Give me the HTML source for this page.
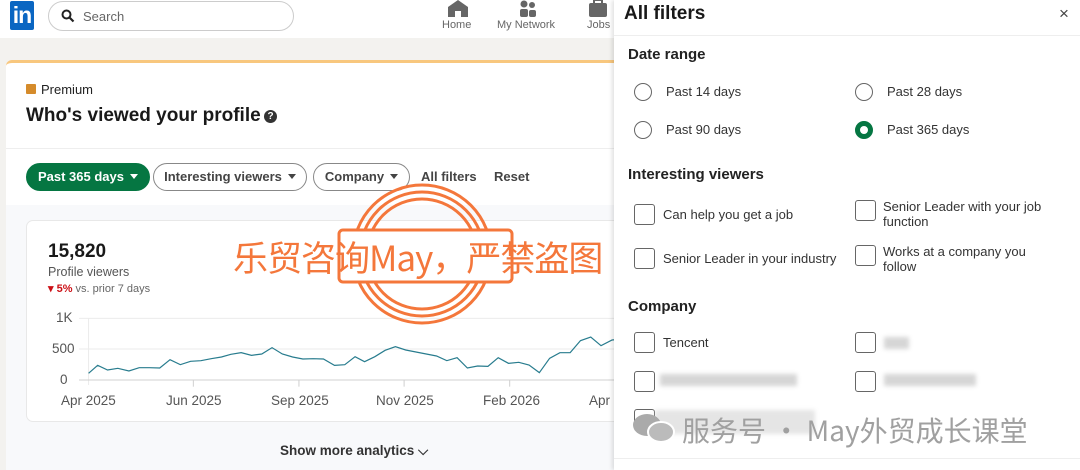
<!DOCTYPE html>
<html><head><meta charset="utf-8"><style>
*{margin:0;padding:0;box-sizing:border-box}
body{width:1080px;height:470px;overflow:hidden;background:#f3f2ef;font-family:"Liberation Sans","Noto Sans CJK SC",sans-serif;color:#191919;position:relative}
.a{position:absolute}
.nav{left:0;top:0;width:614px;height:38px;background:#fff}
.pill{position:absolute;top:163px;height:28px;border-radius:14px;font-size:13px;font-weight:bold;line-height:26px;border:1px solid #888;color:#444;background:#fff;white-space:nowrap;text-align:center}
.tri{display:inline-block;width:0;height:0;border-left:4px solid transparent;border-right:4px solid transparent;border-top:5px solid currentColor;margin-left:6px;vertical-align:2px}
.panel{left:614px;top:0;width:466px;height:470px;background:#fff;box-shadow:-2px 0 4px rgba(0,0,0,.12)}
.h{position:absolute;font-size:15px;font-weight:bold;color:#222}
.rad{position:absolute;width:18px;height:18px;border:1.5px solid #666;border-radius:50%}
.cb{position:absolute;width:21px;height:21px;border:1.5px solid #666;border-radius:3px}
.lb{position:absolute;font-size:13px;color:#333;line-height:15px}
.blur{position:absolute;background:#ccc;filter:blur(2px);opacity:.8}
.ax{position:absolute;font-size:13.5px;color:#555;white-space:nowrap}
</style></head><body>
<div class="a nav"></div>
<div class="a" style="left:10px;top:1px;width:24px;height:29px;background:#0a66c2;border-radius:2px;color:#fff;font-weight:bold;font-size:23px;line-height:29px;text-align:center;letter-spacing:-1px">in</div>
<div class="a" style="left:48px;top:1px;width:246px;height:30px;border:1px solid #ccc;border-radius:15px;background:#fff"></div>
<svg class="a" style="left:61px;top:9px" width="14" height="14" viewBox="0 0 14 14"><circle cx="5.5" cy="5.5" r="4" fill="none" stroke="#222" stroke-width="2"/><path d="M8.5 8.5L12.5 12.5" stroke="#222" stroke-width="2.2"/></svg>
<div class="a" style="left:83px;top:9px;font-size:13px;color:#666">Search</div>
<svg class="a" style="left:447px;top:0" width="22" height="17" viewBox="0 0 22 17"><path d="M11 0L21 7V17H14V11H8V17H1V7Z" fill="#666"/></svg>
<div class="a" style="left:442px;top:19px;font-size:11px;color:#666">Home</div>
<svg class="a" style="left:517px;top:0" width="22" height="17" viewBox="0 0 22 17"><circle cx="7" cy="4" r="3.5" fill="#666"/><circle cx="15" cy="5" r="3" fill="#666"/><rect x="3" y="9" width="8" height="8" rx="2" fill="#666"/><rect x="12" y="10" width="7" height="7" rx="2" fill="#666"/></svg>
<div class="a" style="left:497px;top:19px;font-size:11px;color:#666">My Network</div>
<svg class="a" style="left:588px;top:0" width="20" height="17" viewBox="0 0 20 17"><rect x="6" y="0" width="8" height="4" fill="none" stroke="#666" stroke-width="2"/><rect x="1" y="3" width="18" height="14" rx="2" fill="#666"/></svg>
<div class="a" style="left:587px;top:19px;font-size:11px;color:#666">Jobs</div>

<div class="a" style="left:6px;top:60px;width:608px;height:146px;background:#fff;border-top:3px solid #f8c77e;border-radius:6px 0 0 0"></div>
<div class="a" style="left:6px;top:148px;width:608px;height:1px;background:#eee"></div>
<div class="a" style="left:6px;top:205px;width:608px;height:265px;background:#f8f9fb"></div>
<div class="a" style="left:26px;top:84px;width:10px;height:10px;background:#d58b2b;border-radius:1px"></div>
<div class="a" style="left:41px;top:82px;font-size:13px;color:#222">Premium</div>
<div class="a" style="left:26px;top:105px;font-size:19px;font-weight:bold;color:#191919">Who's viewed your profile</div>
<div class="a" style="left:264px;top:110px;width:13px;height:13px;border-radius:50%;background:#333;color:#fff;font-size:10px;font-weight:bold;text-align:center;line-height:13px">?</div>
<div class="pill" style="left:26px;width:124px;background:#057642;border-color:#057642;color:#fff">Past 365 days<span class="tri"></span></div>
<div class="pill" style="left:153px;width:154px">Interesting viewers<span class="tri"></span></div>
<div class="pill" style="left:313px;width:97px">Company<span class="tri"></span></div>
<div class="a" style="left:421px;top:169px;font-size:13px;font-weight:bold;color:#444">All filters</div>
<div class="a" style="left:494px;top:169px;font-size:13px;font-weight:bold;color:#444">Reset</div>

<div class="a" style="left:26px;top:220px;width:600px;height:202px;background:#fff;border:1px solid #e8e8e8;border-radius:7px"></div>
<div class="a" style="left:48px;top:241px;font-size:19px;font-weight:bold">15,820</div>
<div class="a" style="left:48px;top:265px;font-size:12.5px;color:#555">Profile viewers</div>
<div class="a" style="left:48px;top:282px;font-size:11px;color:#666"><span style="color:#cc1016;font-weight:bold">▾ 5%</span> vs. prior 7 days</div>
<svg class="a" style="left:0;top:210px" width="620" height="260" viewBox="0 0 1568 780" preserveAspectRatio="none">
<line x1="200" y1="325" x2="1568" y2="325" stroke="#ebebeb" stroke-width="1" vector-effect="non-scaling-stroke"/>
<line x1="200" y1="417" x2="1568" y2="417" stroke="#ebebeb" stroke-width="1" vector-effect="non-scaling-stroke"/>
<line x1="224" y1="325" x2="224" y2="525" stroke="#ebebeb" stroke-width="1" vector-effect="non-scaling-stroke"/>
<line x1="200" y1="510" x2="1568" y2="510" stroke="#d0d0d0" stroke-width="1" vector-effect="non-scaling-stroke"/>
<g stroke="#d0d0d0"><line x1="489" y1="510" x2="489" y2="530" vector-effect="non-scaling-stroke"/><line x1="756" y1="510" x2="756" y2="530" vector-effect="non-scaling-stroke"/><line x1="1022" y1="510" x2="1022" y2="530" vector-effect="non-scaling-stroke"/><line x1="1289" y1="510" x2="1289" y2="530" vector-effect="non-scaling-stroke"/></g>
<polyline fill="none" stroke="#287c8e" stroke-width="1.2" vector-effect="non-scaling-stroke" points="224,490 247,466 272,480 298,475 326,483 352,473 378,473 404,474 430,449 456,464 482,454 508,452 534,446 560,441 584,433 610,428 636,436 662,432 688,413 714,432 740,441 766,447 792,446 818,447 846,466 872,464 898,440 922,455 948,440 974,421 1000,410 1026,420 1052,426 1078,432 1104,438 1130,452 1156,443 1182,474 1208,468 1234,469 1260,443 1286,460 1312,457 1338,465 1364,488 1390,445 1416,428 1442,428 1468,392 1494,381 1520,407 1548,390 1568,388"/>
</svg>
<div class="ax" style="left:56px;top:310px">1K</div>
<div class="ax" style="left:52px;top:341px">500</div>
<div class="ax" style="left:60px;top:372px">0</div>
<div class="ax" style="left:61px;top:393px">Apr 2025</div>
<div class="ax" style="left:166px;top:393px">Jun 2025</div>
<div class="ax" style="left:271px;top:393px">Sep 2025</div>
<div class="ax" style="left:376px;top:393px">Nov 2025</div>
<div class="ax" style="left:483px;top:393px">Feb 2026</div>
<div class="ax" style="left:589px;top:393px">Apr</div>
<div class="a" style="left:280px;top:443px;font-size:13.5px;font-weight:bold;color:#333">Show more analytics ⌵</div>

<svg class="a" style="left:337px;top:180px" width="180" height="148" viewBox="0 0 180 148"><g fill="none" stroke="#f4773b" stroke-width="3"><circle cx="85" cy="74" r="69"/><circle cx="85" cy="74" r="62"/><circle cx="85" cy="74" r="55"/></g><rect x="2" y="50" width="173" height="52" rx="4" fill="#fff" stroke="#f4773b" stroke-width="3"/></svg>
<div class="a" style="left:233px;top:231px;font-size:35px;color:#f4773b;font-family:'Noto Sans CJK SC','Liberation Sans',sans-serif;white-space:nowrap;letter-spacing:-1px">乐贸咨询May，严禁盗图</div>

<div class="a panel"></div>
<div class="a" style="left:624px;top:3px;font-size:19px;font-weight:bold;color:#191919">All filters</div>
<div class="a" style="left:1059px;top:4px;font-size:17px;color:#444">×</div>
<div class="a" style="left:614px;top:35px;width:466px;height:1px;background:#eee"></div>
<div class="h" style="left:628px;top:46px">Date range</div>
<div class="rad" style="left:634px;top:83px"></div><div class="lb" style="left:666px;top:84px">Past 14 days</div>
<div class="rad" style="left:855px;top:83px"></div><div class="lb" style="left:887px;top:84px">Past 28 days</div>
<div class="rad" style="left:634px;top:121px"></div><div class="lb" style="left:666px;top:122px">Past 90 days</div>
<div class="rad" style="left:855px;top:121px;border:5px solid #057642"></div><div class="lb" style="left:887px;top:122px">Past 365 days</div>
<div class="h" style="left:628px;top:166px">Interesting viewers</div>
<div class="cb" style="left:634px;top:204px"></div><div class="lb" style="left:663px;top:207px">Can help you get a job</div>
<div class="cb" style="left:855px;top:200px"></div><div class="lb" style="left:883px;top:199px">Senior Leader with your job<br>function</div>
<div class="cb" style="left:634px;top:248px"></div><div class="lb" style="left:663px;top:251px">Senior Leader in your industry</div>
<div class="cb" style="left:855px;top:245px"></div><div class="lb" style="left:883px;top:244px">Works at a company you<br>follow</div>
<div class="h" style="left:628px;top:298px">Company</div>
<div class="cb" style="left:634px;top:332px"></div><div class="lb" style="left:663px;top:335px">Tencent</div>
<div class="cb" style="left:855px;top:332px"></div><div class="blur" style="left:884px;top:337px;width:25px;height:12px"></div>
<div class="cb" style="left:634px;top:371px"></div><div class="blur" style="left:660px;top:374px;width:137px;height:12px"></div>
<div class="cb" style="left:855px;top:371px"></div><div class="blur" style="left:884px;top:374px;width:92px;height:12px"></div>
<div class="cb" style="left:634px;top:409px"></div><div class="blur" style="left:655px;top:410px;width:160px;height:24px;opacity:.5"></div>
<svg class="a" style="left:632px;top:412px" width="44" height="32" viewBox="0 0 44 32"><ellipse cx="15" cy="13" rx="14" ry="11" fill="#aaa"/><ellipse cx="29" cy="20" rx="13" ry="10" fill="#bbb" stroke="#fff" stroke-width="2"/></svg>
<div class="a" style="left:682px;top:410px;font-size:28px;color:#a0a0a0;font-family:'Noto Sans CJK SC','Liberation Sans',sans-serif;white-space:nowrap">服务号 · May外贸成长课堂</div>
<div class="a" style="left:614px;top:458px;width:466px;height:1px;background:#eee"></div>
</body></html>
